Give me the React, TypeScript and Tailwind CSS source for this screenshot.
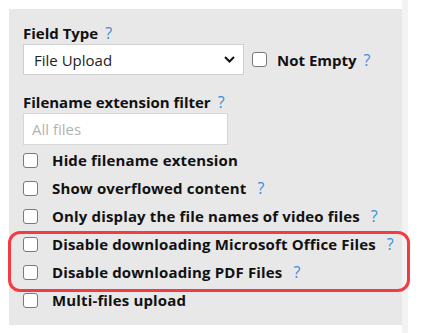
import React from "react";

function Help({ gap = "ml-[7px]" }: { gap?: string }) {
  return <span className="font-normal text-[#3a8fd8] text-[16px]" style={{ marginLeft: gap === "wide" ? 11 : 7 }}>?</span>;
}

function Box() {
  return <span className="inline-block w-[15px] h-[15px] shrink-0 rounded-[3px] border border-[#7a7a7a] bg-white" />;
}

function CheckRow({ label, help }: { label: string; help?: boolean }) {
  return (
    <div className="flex h-[28px] items-center">
      <Box />
      <span className="ml-[14px] font-bold tracking-[0.15px] text-[#111]">{label}</span>
      {help && <Help gap="wide" />}
    </div>
  );
}

export default function App() {
  return (
    <div
      className="relative flex h-[333px] w-[424px] bg-white text-[15px] leading-[20px]"
      style={{ fontFamily: '"Open Sans", "Noto Sans", sans-serif' }}
    >
      <div className="w-[402px] pl-[9px] pt-[9px]">
        <div className="h-[316px] bg-[#e8e8e8] pl-[14px] pt-[14px]">
          <div className="font-bold text-[#111]">
            Field Type
            <Help />
          </div>
          <div className="mt-[1px] flex items-center">
            <div className="flex h-[31px] w-[221px] items-center justify-between border border-[#cfcfcf] bg-white pl-[10px] pr-[8px] text-[#222]">
              <span>File Upload</span>
              <svg width="11" height="7" viewBox="0 0 11 7" fill="none">
                <path d="M1 1l4.5 4.5L10 1" stroke="#111" strokeWidth="2" />
              </svg>
            </div>
            <span className="ml-[8px] flex">
              <Box />
            </span>
            <span className="ml-[10px] font-bold text-[#111]">Not Empty</span>
            <Help />
          </div>

          <div className="mt-[17px] font-bold text-[#111]">
            Filename extension filter
            <Help />
          </div>
          <div className="mt-[1px] flex h-[32px] w-[205px] items-center border border-[#d6d6d6] bg-white pl-[8px] text-[#b3b3b3]">
            All files
          </div>

          <div className="mt-[1px]">
            <CheckRow label="Hide filename extension" />
            <CheckRow label="Show overflowed content" help />
            <CheckRow label="Only display the file names of video files" help />
            <CheckRow label="Disable downloading Microsoft Office Files" help />
            <CheckRow label="Disable downloading PDF Files" help />
            <CheckRow label="Multi-files upload" />
          </div>
        </div>
      </div>
      <div className="h-full w-[6px] bg-[#f3f3f3]" />

      <div className="pointer-events-none absolute left-[8px] top-[231px] h-[61px] w-[402px] rounded-[12px] border-[3px] border-[#f23b42]" />
    </div>
  );
}
